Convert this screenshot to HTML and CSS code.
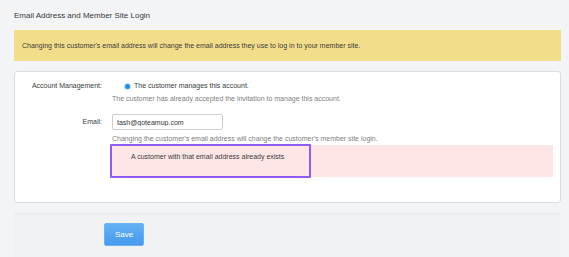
FILE: index.html
```html
<!DOCTYPE html>
<html lang="en">
<head>
  <meta charset="UTF-8">
  <title>Email Address and Member Site Login</title>
  <link rel="stylesheet" href="styles.css">
</head>
<body>
<div class="page">
  <h3 class="title">Email Address and Member Site Login</h3>
  <div class="notice">Changing this customer's email address will change the email address they use to log in to your member site.</div>

  <div class="panel">
    <!-- account management -->
    <div class="row">
      <div class="label">Account Management:</div>
      <div class="field">
        <label class="radio"><span class="dot"></span>The customer manages this account.</label>
        <p class="help">The customer has already accepted the invitation to manage this account.</p>
      </div>
    </div>
    <!-- email -->
    <div class="row email-row">
      <div class="label">Email:</div>
      <div class="field">
        <input type="text" class="input" value="tash@goteamup.com">
        <p class="help help-tight">Changing the customer's email address will change the customer's member site login.</p>
        <div class="error">
          A customer with that email address already exists
          <span class="highlight"></span>
        </div>
      </div>
    </div>
  </div>

  <div class="footer">
    <input type="button" class="btn" value="Save">
  </div>
</div>
</body>
</html>
```

FILE: styles.css
```css
body {
  margin: 0;
  padding: 0;
  background-color: #F3F4F6;
  font-family: "Liberation Sans", Arial, sans-serif;
  color: #444;
}

.page {
  padding: 0 8px 0 14px;
}

.title {
  margin: 0;
  padding-top: 9px;
  font-size: 8px;
  font-weight: normal;
  line-height: 13px;
  color: #3A3A3A;
}

.notice {
  margin-top: 8px;
  height: 31px;
  padding: 0 8px;
  box-sizing: border-box;
  background-color: #F2DE8A;
  font-size: 7px;
  line-height: 31px;
  color: #3C3C3C;
}

.panel {
  margin-top: 10px;
  height: 132px;
  padding: 7px 7px 0 0;
  box-sizing: border-box;
  background-color: #FFF;
  border: 1px solid #DADCE0;
  border-radius: 3px;
}

.row {
  display: grid;
  grid-template-columns: 87px 1fr;
  column-gap: 10px;
  font-size: 7px;
}

.label {
  text-align: right;
  line-height: 13px;
  color: #3C3C3C;
}

.radio {
  display: flex;
  align-items: center;
  line-height: 13px;
  color: #3C3C3C;
}

.dot {
  width: 5px;
  height: 5px;
  margin: 1px 4px 0 13px;
  border-radius: 50%;
  background-color: #2A8CE8;
  box-shadow: 0 0 0 1px #C6E1F8;
}

.help {
  margin: 0;
  line-height: 13px;
  color: #808080;
}

.email-row {
  margin-top: 9px;
}

.email-row .label {
  line-height: 16px;
}

.input {
  display: block;
  width: 111px;
  height: 16px;
  padding: 0 4px;
  box-sizing: border-box;
  border: 1px solid #CFCFCF;
  border-radius: 2px;
  font-family: "Liberation Sans", Arial, sans-serif;
  font-size: 7px;
  color: #333;
  outline: none;
}

.help-tight {
  margin-top: 3px;
  line-height: 12px;
}

.error {
  position: relative;
  margin-left: -1px;
  height: 32px;
  padding: 5px 0 0 20px;
  box-sizing: border-box;
  background-color: #FDE6E5;
  line-height: 13px;
  color: #3C3C3C;
}

.highlight {
  position: absolute;
  left: -1px;
  top: -1px;
  width: 201px;
  height: 34px;
  box-sizing: border-box;
  border: 2px solid #8F5CF7;
  border-radius: 1px;
}

.footer {
  margin-top: 10px;
  height: 44px;
  padding: 9px 0 0 90px;
  border-top: 1px solid #E9EAED;
  background-color: #F1F2F4;
}

.btn {
  display: block;
  width: 40px;
  height: 23px;
  border: 1px solid #6DB3F2;
  border-radius: 2px;
  background: linear-gradient(#62B1F5, #4699EC);
  color: #FFF;
  font-family: "Liberation Sans", Arial, sans-serif;
  font-size: 8px;
}
```
